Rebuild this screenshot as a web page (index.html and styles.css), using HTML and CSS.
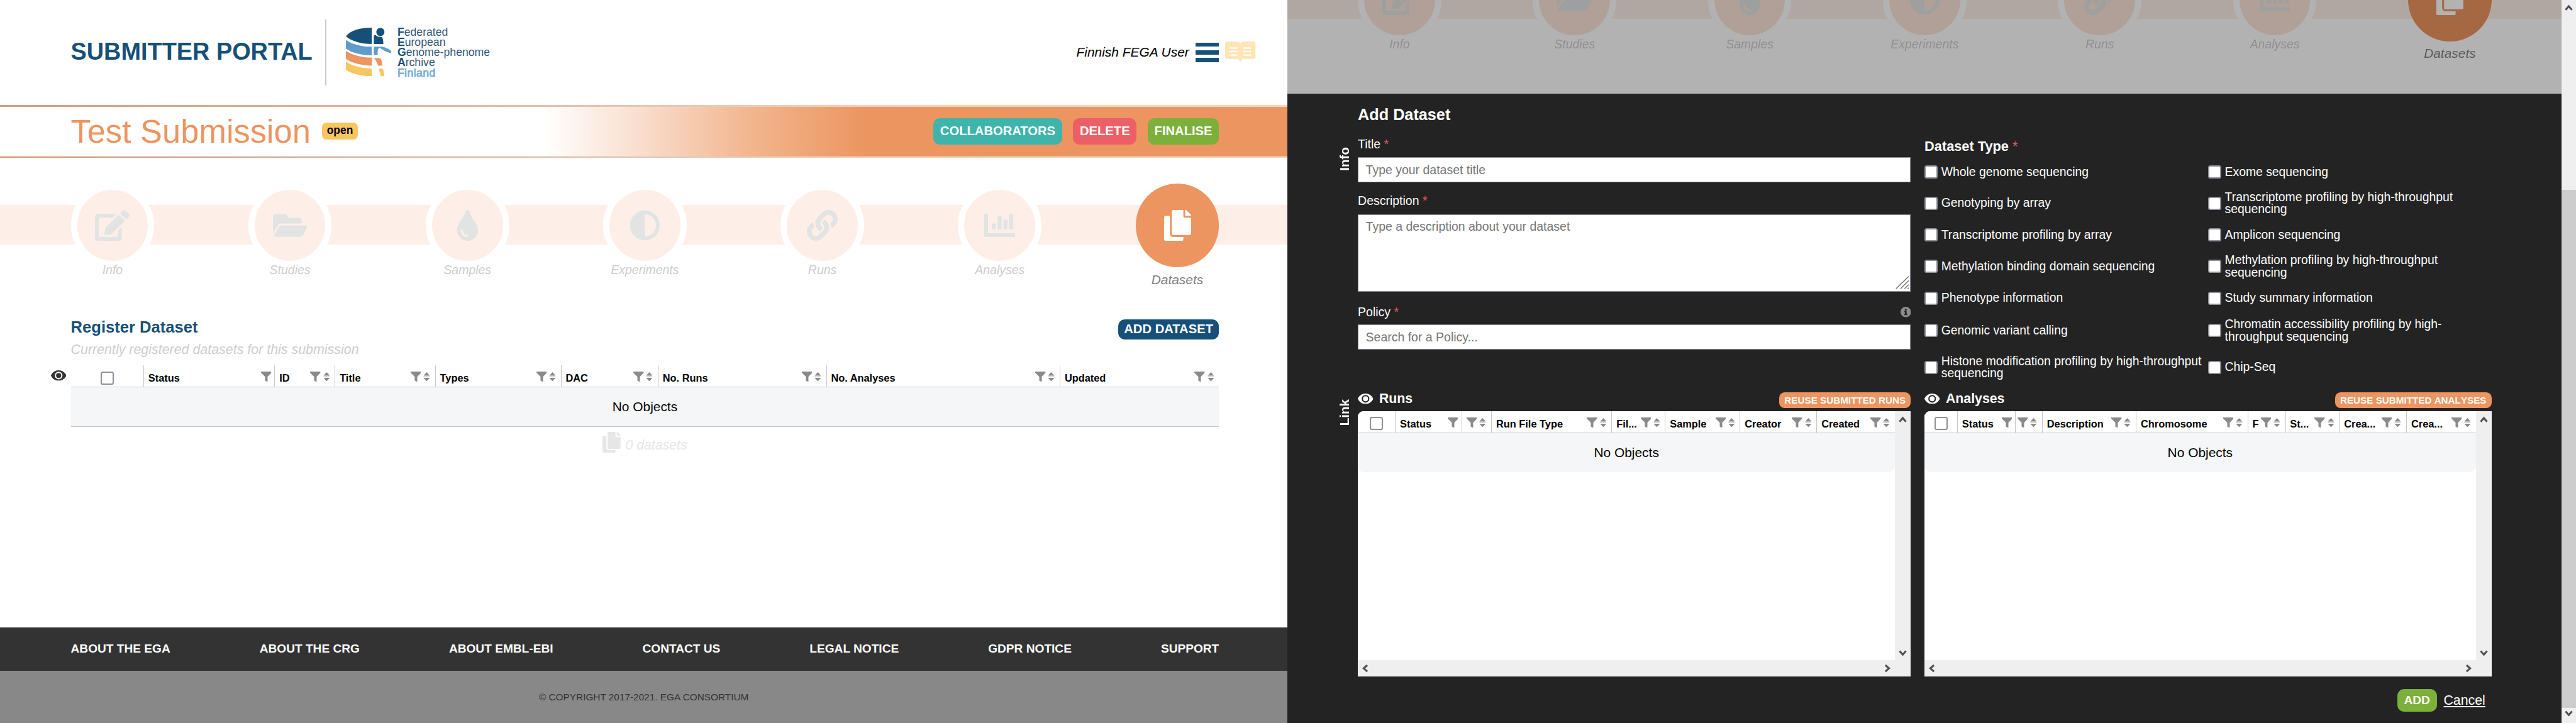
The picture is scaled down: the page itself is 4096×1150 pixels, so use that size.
FILE: index.html
```html
<!DOCTYPE html>
<html lang="en">
<head>
<meta charset="utf-8">
<title>Submitter Portal</title>
<link rel="stylesheet" href="styles.css">
</head>
<body>
<svg class="sprite" aria-hidden="true">
  <symbol id="edit" viewBox="0 0 576 512"><path d="M402.6 83.2l90.2 90.2c3.8 3.8 3.8 10 0 13.8L274.4 405.6l-92.8 10.3c-12.4 1.4-22.9-9.1-21.5-21.5l10.3-92.8L388.8 83.2c3.8-3.8 10-3.8 13.8 0zm162-22.9l-48.8-48.8c-15.2-15.2-39.9-15.2-55.2 0l-35.4 35.4c-3.8 3.8-3.8 10 0 13.8l90.2 90.2c3.8 3.8 10 3.8 13.8 0l35.4-35.4c15.2-15.3 15.2-40 0-55.2zM384 346.2V448H64V128h229.8c3.2 0 6.2-1.3 8.5-3.5l40-40c7.6-7.6 2.2-20.5-8.5-20.5H48C21.5 64 0 85.5 0 112v352c0 26.5 21.5 48 48 48h352c26.5 0 48-21.5 48-48V306.2c0-10.7-12.9-16-20.5-8.5l-40 40c-2.2 2.3-3.5 5.3-3.5 8.5z"/></symbol>
  <symbol id="folder" viewBox="0 0 576 512"><path d="M572.694 292.093L500.27 416.248A63.997 63.997 0 0 1 444.989 448H45.025c-18.523 0-30.064-20.093-20.731-36.093l72.424-124.155A64 64 0 0 1 152 256h399.964c18.523 0 30.064 20.093 20.73 36.093zM152 224h328v-48c0-26.51-21.49-48-48-48H272l-64-64H48C21.49 64 0 85.49 0 112v278.046l69.077-118.418C86.214 242.25 117.989 224 152 224z"/></symbol>
  <symbol id="drop" viewBox="0 0 352 512"><path d="M205.22 22.09c-7.94-28.78-49.44-30.12-58.44 0C100.01 179.85 0 222.72 0 333.91 0 432.35 78.72 512 176 512s176-79.65 176-178.09c0-111.75-99.79-153.34-146.78-311.82zM176 448c-61.75 0-112-50.25-112-112 0-8.84 7.16-16 16-16s16 7.16 16 16c0 44.11 35.89 80 80 80 8.84 0 16 7.16 16 16s-7.16 16-16 16z"/></symbol>
  <symbol id="adjust" viewBox="0 0 512 512"><path d="M8 256c0 136.966 111.033 248 248 248s248-111.034 248-248S392.966 8 256 8 8 119.033 8 256zm248 184V72c101.705 0 184 82.311 184 184 0 101.705-82.311 184-184 184z"/></symbol>
  <symbol id="link" viewBox="0 0 512 512"><path d="M326.612 185.391c59.747 59.809 58.927 155.698.36 214.59-.11.12-.24.25-.36.37l-67.2 67.2c-59.27 59.27-155.699 59.262-214.96 0-59.27-59.26-59.27-155.7 0-214.96l37.106-37.106c9.84-9.84 26.786-3.3 27.294 10.606.648 17.722 3.826 35.527 9.69 52.721 1.986 5.822.567 12.262-3.783 16.612l-13.087 13.087c-28.026 28.026-28.905 73.66-1.155 101.96 28.024 28.579 74.086 28.749 102.325.51l67.2-67.19c28.191-28.191 28.073-73.757 0-101.83-3.701-3.694-7.429-6.564-10.341-8.569a16.037 16.037 0 0 1-6.947-12.606c-.396-10.567 3.348-21.456 11.698-29.806l21.054-21.055c5.521-5.521 14.182-6.199 20.584-1.731a152.482 152.482 0 0 1 20.522 17.197zM467.547 44.449c-59.261-59.262-155.69-59.27-214.96 0l-67.2 67.2c-.12.12-.25.25-.36.37-58.566 58.892-59.387 154.781.36 214.59a152.454 152.454 0 0 0 20.521 17.196c6.402 4.468 15.064 3.789 20.584-1.731l21.054-21.055c8.35-8.35 12.094-19.239 11.698-29.806a16.037 16.037 0 0 0-6.947-12.606c-2.912-2.005-6.64-4.875-10.341-8.569-28.073-28.073-28.191-73.639 0-101.83l67.2-67.19c28.239-28.239 74.3-28.069 102.325.51 27.75 28.3 26.872 73.934-1.155 101.96l-13.087 13.087c-4.35 4.35-5.769 10.79-3.783 16.612 5.864 17.194 9.042 34.999 9.69 52.721.509 13.906 17.454 20.446 27.294 10.606l37.106-37.106c59.271-59.259 59.271-155.699.001-214.959z"/></symbol>
  <symbol id="chart" viewBox="0 0 512 512"><path d="M12 64h40a12 12 0 0 1 12 12v308h432a16 16 0 0 1 16 16v32a16 16 0 0 1-16 16H16a16 16 0 0 1-16-16V76a12 12 0 0 1 12-12zM128 236a12 12 0 0 1 12-12h40a12 12 0 0 1 12 12v84h-64zM224 108a12 12 0 0 1 12-12h40a12 12 0 0 1 12 12v212h-64zM320 172a12 12 0 0 1 12-12h40a12 12 0 0 1 12 12v148h-64zM416 76a12 12 0 0 1 12-12h40a12 12 0 0 1 12 12v244h-64z"/></symbol>
  <symbol id="copy" viewBox="0 0 448 512"><path d="M320 448v40c0 13.255-10.745 24-24 24H24c-13.255 0-24-10.745-24-24V120c0-13.255 10.745-24 24-24h72v296c0 30.879 25.121 56 56 56h168zm0-344V0H152c-13.255 0-24 10.745-24 24v368c0 13.255 10.745 24 24 24h272c13.255 0 24-10.745 24-24V128H344c-13.2 0-24-10.8-24-24zm120.971-31.029L375.029 7.029A24 24 0 0 0 358.059 0H352v96h96v-6.059a24 24 0 0 0-7.029-16.97z"/></symbol>
  <symbol id="eye" viewBox="0 0 34 23"><path fill-rule="evenodd" d="M17 0C9.500 0 3.500 4.200.3 10.500a2 2 0 0 0 0 2C3.500 18.800 9.500 23 17 23s13.500-4.200 16.700-10.500a2 2 0 0 0 0-2C30.500 4.200 24.500 0 17 0zM17 3a8.500 8.500 0 1 1 0 17a8.500 8.500 0 0 1 0-17z"/><circle cx="17" cy="11.500" r="5.600"/></symbol>
  <symbol id="filter" viewBox="0 0 23 23"><path d="M0 0h23v2.500L14.500 11.500V23L9 20V11.500L0 2.500z"/></symbol>
  <symbol id="sort" viewBox="0 0 15 20"><path d="M7.500 0L14.500 7.500H.5zM7.500 20L.5 12.500h14z"/><path opacity=".45" d="M.5 9h14v2.200H.5z"/></symbol>
  <symbol id="chevron" viewBox="0 0 18 14"><path fill="none" stroke="#505050" stroke-width="4.200" d="M2 12L9 4l7 8"/></symbol>
</svg>

<div class="screen portal">
  <header class="top">
    <h1>SUBMITTER PORTAL</h1>
    <span class="divider"></span>
    <svg class="logo" viewBox="0 0 100 108">
      <g fill="#165079"><path d="M57 0v36C34 36 12 30 0 19C10 6 32 0 57 0z"/><circle cx="76" cy="9.500" r="9"/><path d="M61.500 36V20c0-4 4-5 6-2c5 3 11 2 12 3c3 4 3 10 3 15z"/></g>
      <g fill="#609ccb"><path d="M0 27c14 10 34 15 57 15v19C34 61 12 55 0 46z"/><path d="M61.500 42h18c8 2 14 4 20 9v5c-7-1-14-5-19-8l-7-4c-4 5-4 11-3 16h-9z"/></g>
      <g fill="#ec9560"><path d="M0 51c14 10 34 15 57 15v18C34 83 12 78 0 69z"/><path d="M62 67h12c5 3 6 9 6 17h-9c-2-6-5-12-9-17z"/></g>
      <g fill="#f8c660"><path d="M0 75c14 10 34 15 57 15v17C34 107 12 102 0 93z"/><path d="M72 90h9c3 5 3 11 3 17h-7c-1-6-3-11-5-17z"/></g>
    </svg>
    <div class="logo-text">
      <span><b>F</b>ederated</span><span><b>E</b>uropean</span><span><b>G</b>enome-phenome</span><span><b>A</b>rchive</span><span class="country">Finland</span>
    </div>
    <span class="user">Finnish FEGA User</span>
    <span class="burger"><i></i><i></i><i></i></span>
    <svg class="book" viewBox="0 0 67 47"><path fill="#fde5b6" d="M5 0h20c5 0 7 2 8.500 5C35 2 37 0 42 0h20c3 0 5 2 5 5v29c0 3-2 4.500-5 4.500H41c-5 0-6 3-7.500 8.500C32 41.500 31 38.500 26 38.500H5c-3 0-5-1.500-5-4.500V5c0-3 2-5 5-5z"/><path stroke="#fff" stroke-width="3.200" stroke-linecap="round" d="M11 14.500h15M11 22h15M11 30h15M41 14.500h15M41 22h15M41 30h15"/></svg>
  </header>

  <div class="titlebar">
    <h2>Test Submission</h2><span class="badge">open</span>
    <div class="buttons"><button class="btn teal">COLLABORATORS</button><button class="btn red">DELETE</button><button class="btn green">FINALISE</button></div>
  </div>

  <nav class="stepper">
    <div class="step"><span class="dot"><svg><use href="#edit"/></svg></span><em>Info</em></div>
    <div class="step"><span class="dot"><svg><use href="#folder"/></svg></span><em>Studies</em></div>
    <div class="step"><span class="dot"><svg><use href="#drop"/></svg></span><em>Samples</em></div>
    <div class="step"><span class="dot"><svg><use href="#adjust"/></svg></span><em>Experiments</em></div>
    <div class="step"><span class="dot"><svg><use href="#link"/></svg></span><em>Runs</em></div>
    <div class="step"><span class="dot"><svg><use href="#chart"/></svg></span><em>Analyses</em></div>
    <div class="step active"><span class="dot"><svg><use href="#copy"/></svg></span><em>Datasets</em></div>
  </nav>

  <main class="register">
    <div class="register-head"><h3>Register Dataset</h3><button class="btn navy">ADD DATASET</button></div>
    <p class="sub">Currently registered datasets for this submission</p>
    <div class="table-line">
      <svg class="eye dark"><use href="#eye"/></svg>
      <div class="table">
        <div class="thead datasets-cols">
          <div class="th check"><span class="box"></span></div>
          <div class="th nosort"><b>Status</b><svg class="fi"><use href="#filter"/></svg></div>
          <div class="th"><b>ID</b><svg class="fi"><use href="#filter"/></svg><svg class="so"><use href="#sort"/></svg></div>
          <div class="th"><b>Title</b><svg class="fi"><use href="#filter"/></svg><svg class="so"><use href="#sort"/></svg></div>
          <div class="th"><b>Types</b><svg class="fi"><use href="#filter"/></svg><svg class="so"><use href="#sort"/></svg></div>
          <div class="th"><b>DAC</b><svg class="fi"><use href="#filter"/></svg><svg class="so"><use href="#sort"/></svg></div>
          <div class="th"><b>No. Runs</b><svg class="fi"><use href="#filter"/></svg><svg class="so"><use href="#sort"/></svg></div>
          <div class="th"><b>No. Analyses</b><svg class="fi"><use href="#filter"/></svg><svg class="so"><use href="#sort"/></svg></div>
          <div class="th"><b>Updated</b><svg class="fi"><use href="#filter"/></svg><svg class="so"><use href="#sort"/></svg></div>
        </div>
        <div class="empty ruled">No Objects</div>
      </div>
    </div>
    <div class="count"><svg><use href="#copy"/></svg><span>0 datasets</span></div>
  </main>

  <footer>
    <div class="links"><a>ABOUT THE EGA</a><a>ABOUT THE CRG</a><a>ABOUT EMBL-EBI</a><a>CONTACT US</a><a>LEGAL NOTICE</a><a>GDPR NOTICE</a><a>SUPPORT</a></div>
    <div class="copyright">© COPYRIGHT 2017-2021. EGA CONSORTIUM</div>
  </footer>
</div>

<div class="screen dialog-screen">
  <div class="behind">
    <nav class="stepper">
      <div class="step"><span class="dot"><svg><use href="#edit"/></svg></span><em>Info</em></div>
      <div class="step"><span class="dot"><svg><use href="#folder"/></svg></span><em>Studies</em></div>
      <div class="step"><span class="dot"><svg><use href="#drop"/></svg></span><em>Samples</em></div>
      <div class="step"><span class="dot"><svg><use href="#adjust"/></svg></span><em>Experiments</em></div>
      <div class="step"><span class="dot"><svg><use href="#link"/></svg></span><em>Runs</em></div>
      <div class="step"><span class="dot"><svg><use href="#chart"/></svg></span><em>Analyses</em></div>
      <div class="step active"><span class="dot"><svg><use href="#copy"/></svg></span><em>Datasets</em></div>
    </nav>
  </div>

  <form class="dialog">
    <h3>Add Dataset</h3>
    <section class="block info">
      <div class="side">Info</div>
      <div class="fields">
        <div class="label">Title <i>*</i></div>
        <div class="input">Type your dataset title</div>
        <div class="label">Description <i>*</i></div>
        <div class="input area"><span>Type a description about your dataset</span><svg class="grip" viewBox="0 0 30 29"><path stroke="#6d6d6d" stroke-width="2" d="M1 28L29 1M11 28L29 10M20 28l9-9M27 28l2-2"/></svg></div>
        <div class="label policy"><span>Policy <i>*</i></span><svg viewBox="0 0 23 23"><circle cx="11.500" cy="11.500" r="11.500" fill="#8c8c8c"/><path fill="#232323" d="M9.500 4.500h4v3.500h-4zM8 9.500h5.500v7H15v2H8v-2h1.500v-5H8z"/></svg></div>
        <div class="input">Search for a Policy...</div>
      </div>
      <div class="types">
        <div class="types-title">Dataset Type <i>*</i></div>
        <div class="types-grid">
          <label><span class="box"></span>Whole genome sequencing</label>
          <label><span class="box"></span>Exome sequencing</label>
          <label><span class="box"></span>Genotyping by array</label>
          <label><span class="box"></span>Transcriptome profiling by high-throughput<br>sequencing</label>
          <label><span class="box"></span>Transcriptome profiling by array</label>
          <label><span class="box"></span>Amplicon sequencing</label>
          <label><span class="box"></span>Methylation binding domain sequencing</label>
          <label><span class="box"></span>Methylation profiling by high-throughput<br>sequencing</label>
          <label><span class="box"></span>Phenotype information</label>
          <label><span class="box"></span>Study summary information</label>
          <label><span class="box"></span>Genomic variant calling</label>
          <label><span class="box"></span>Chromatin accessibility profiling by high-<br>throughput sequencing</label>
          <label><span class="box"></span>Histone modification profiling by high-throughput<br>sequencing</label>
          <label><span class="box"></span>Chip-Seq</label>
        </div>
      </div>
    </section>

    <section class="block linked">
      <div class="side">Link</div>
      <div>
        <div class="linked-head"><svg class="eye"><use href="#eye"/></svg><h4>Runs</h4><button class="btn reuse">REUSE SUBMITTED RUNS</button></div>
        <div class="scroller">
          <div class="view">
            <div class="thead runs-cols">
              <div class="th check"><span class="box"></span></div>
              <div class="th nosort"><b>Status</b><svg class="fi"><use href="#filter"/></svg></div>
              <div class="th"><b></b><svg class="fi"><use href="#filter"/></svg><svg class="so"><use href="#sort"/></svg></div>
              <div class="th"><b>Run File Type</b><svg class="fi"><use href="#filter"/></svg><svg class="so"><use href="#sort"/></svg></div>
              <div class="th"><b>Fil...</b><svg class="fi"><use href="#filter"/></svg><svg class="so"><use href="#sort"/></svg></div>
              <div class="th"><b>Sample</b><svg class="fi"><use href="#filter"/></svg><svg class="so"><use href="#sort"/></svg></div>
              <div class="th"><b>Creator</b><svg class="fi"><use href="#filter"/></svg><svg class="so"><use href="#sort"/></svg></div>
              <div class="th"><b>Created</b><svg class="fi"><use href="#filter"/></svg><svg class="so"><use href="#sort"/></svg></div>
            </div>
            <div class="empty">No Objects</div>
          </div>
          <div class="vbar"><svg><use href="#chevron"/></svg><svg class="down"><use href="#chevron"/></svg></div>
          <div class="hbar"><svg class="left"><use href="#chevron"/></svg><svg class="right"><use href="#chevron"/></svg></div>
        </div>
      </div>
      <div>
        <div class="linked-head"><svg class="eye"><use href="#eye"/></svg><h4>Analyses</h4><button class="btn reuse">REUSE SUBMITTED ANALYSES</button></div>
        <div class="scroller">
          <div class="view">
            <div class="thead analyses-cols">
              <div class="th check"><span class="box"></span></div>
              <div class="th nosort"><b>Status</b><svg class="fi"><use href="#filter"/></svg></div>
              <div class="th tight"><b></b><svg class="fi"><use href="#filter"/></svg><svg class="so"><use href="#sort"/></svg></div>
              <div class="th"><b>Description</b><svg class="fi"><use href="#filter"/></svg><svg class="so"><use href="#sort"/></svg></div>
              <div class="th"><b>Chromosome</b><svg class="fi"><use href="#filter"/></svg><svg class="so"><use href="#sort"/></svg></div>
              <div class="th"><b>F</b><svg class="fi"><use href="#filter"/></svg><svg class="so"><use href="#sort"/></svg></div>
              <div class="th"><b>St...</b><svg class="fi"><use href="#filter"/></svg><svg class="so"><use href="#sort"/></svg></div>
              <div class="th"><b>Crea...</b><svg class="fi"><use href="#filter"/></svg><svg class="so"><use href="#sort"/></svg></div>
              <div class="th"><b>Crea...</b><svg class="fi"><use href="#filter"/></svg><svg class="so"><use href="#sort"/></svg></div>
            </div>
            <div class="empty">No Objects</div>
          </div>
          <div class="vbar"><svg><use href="#chevron"/></svg><svg class="down"><use href="#chevron"/></svg></div>
          <div class="hbar"><svg class="left"><use href="#chevron"/></svg><svg class="right"><use href="#chevron"/></svg></div>
        </div>
      </div>
    </section>
    <div class="actions"><button class="btn add">ADD</button><a>Cancel</a></div>
  </form>
</div>

<div class="page-scroll"><svg><use href="#chevron"/></svg><span class="thumb"></span><svg class="down"><use href="#chevron"/></svg></div>
</body>
</html>
```

FILE: styles.css
```css
/* 1rem is ten layout units; the page is 567.8rem wide and scales with the window */
html { font-size: calc(100vw / 567.8); }
* { box-sizing: border-box; }
body {
  margin: 0;
  width: 100vw;
  height: 100vh;
  overflow: hidden;
  display: grid;
  grid-template-columns: 283.8rem 280.8rem 1fr;
  font-family: "Liberation Sans", Arial, sans-serif;
  font-size: 2.9rem;
  color: #000;
  background: #fff;
}
h1, h2, h3, h4, p { margin: 0; }
.sprite { position: absolute; width: 0; height: 0; }
svg { display: block; flex: none; fill: currentColor; }
.screen { display: flex; flex-direction: column; min-width: 0; height: 100vh; overflow: hidden; }

/* buttons */
.btn {
  border: 0;
  margin: 0;
  padding: 0 1.5rem;
  height: 5.9rem;
  border-radius: 1.5rem;
  font: bold 2.8rem "Liberation Sans", Arial, sans-serif;
  color: #fff;
  white-space: nowrap;
}
.teal { background: #3eb4aa; }
.red { background: #ec5f66; }
.green { background: #7cb03a; }
.navy { background: #165079; height: 4.4rem; padding: 0 1.3rem; }

/* header */
.top { height: 23.1rem; padding: 0 7rem 0 15.6rem; display: flex; align-items: center; }
h1 { font-size: 5.25rem; color: #165079; line-height: 1; width: 56.1rem; white-space: nowrap; }
.divider { width: .2rem; height: 14.5rem; background: #c8c8c8; }
.logo { width: 10rem; height: 10.8rem; margin-left: 4.3rem; }
.logo-text { display: flex; flex-direction: column; margin-left: 1.4rem; font-size: 2.45rem; line-height: 2.24rem; color: #34597a; }
.logo-text b { color: #165079; }
.logo-text .country { color: #74add6; -webkit-text-stroke: .1rem #74add6; letter-spacing: .06rem; }
.user { margin-left: auto; font-style: italic; }
.burger { width: 5.2rem; height: 4.3rem; margin-left: 1.4rem; display: flex; flex-direction: column; justify-content: space-between; }
.burger i { height: .9rem; background: #165079; }
.book { width: 6.7rem; height: 4.7rem; margin-left: 1.4rem; }

/* submission title */
.titlebar {
  height: 11.7rem;
  padding: .4rem 15.1rem .4rem 15.6rem;
  display: flex;
  align-items: center;
  background:
    linear-gradient(90deg, #fff 120rem, #f9dccb 142rem, #f2b68f 165rem, #ec9560 191rem) center / 100% 10.9rem no-repeat,
    linear-gradient(90deg, #cf9f7d, #e6c6b6 142rem, #f3cfb6 190rem, #f6d6bd);
}
h2 { font-size: 7.26rem; font-weight: normal; line-height: 1; color: #ec9560; white-space: nowrap; }
.badge { margin-left: 2.5rem; padding: 0 1.1rem; height: 3.7rem; line-height: 3.6rem; border-radius: 1rem; background: #f8c660; font-size: 2.42rem; font-weight: bold; }
.buttons { margin-left: auto; display: flex; gap: 2.4rem; }

/* stepper */
.stepper {
  flex: none;
  height: 35.6rem;
  padding: 5.7rem 15.1rem 0 15.6rem;
  display: flex;
  justify-content: space-between;
  background: linear-gradient(#fdefe8, #fdefe8) 0 10.4rem / 100% 8.8rem no-repeat #fff;
}
.step { width: 18.4rem; display: flex; flex-direction: column; align-items: center; }
.dot { width: 18.4rem; height: 18.4rem; border-radius: 50%; border: 1.5rem solid #fff; background: #fdefe8; color: #e2e3e3; display: grid; place-items: center; }
.dot svg { width: 7.6rem; height: 6.8rem; }
.step em { margin-top: -.8rem; height: 3rem; line-height: 3rem; font-size: 2.7rem; color: #cdcdcd; }
.active .dot { border: 0; background: #ec9560; color: #fff; }
.active em { margin-top: 1.2rem; font-size: 2.9rem; color: #808080; }

/* registered datasets */
.register { flex: 1; padding: 0 15.1rem 0 15.6rem; }
.register-head { display: flex; justify-content: space-between; height: 4.4rem; }
.register h3 { font-size: 3.55rem; line-height: 3.4rem; color: #165079; }
.sub { margin-top: .55rem; font-size: 2.97rem; line-height: 3.4rem; font-style: italic; color: #cdcdcd; }
.table-line { display: flex; margin: 1.85rem 0 0 -4.4rem; }
.eye { width: 3.4rem; height: 2.3rem; }
.eye.dark { color: #333; margin: 1.1rem 1rem 0 0; }
.table { flex: 1; }
.thead { display: grid; height: 4.8rem; background: #fff; border-bottom: .2rem solid #c8c8c8; }
.datasets-cols { grid-template-columns: 16rem 28.9rem 13.3rem 22.1rem 27.7rem 21.4rem 37.1rem 51.5rem 1fr; }
.runs-cols { grid-template-columns: 8.2rem 14.6rem 6.6rem 26.5rem 11.8rem 16.5rem 16.9rem 1fr; }
.analyses-cols { grid-template-columns: 7.2rem 12.8rem 5.9rem 20.7rem 24.6rem 8.3rem 11.9rem 14.8rem 1fr; }
.th { display: flex; align-items: center; min-width: 0; padding: .3rem 1.1rem 0 .95rem; border-left: .2rem solid #c8c8c8; }
.th b { flex: 1; min-width: 0; padding-top: .7rem; font-size: 2.27rem; line-height: 2.6rem; white-space: nowrap; }
.th.nosort { padding-right: .7rem; }
.th.tight { padding-left: 0; }
.check { border-left: 0; justify-content: center; padding: .6rem 0 0; }
.datasets-cols .check { padding: .9rem 0 0; }
.fi { width: 2.3rem; height: 2.3rem; color: #8a8a8a; }
.so { width: 1.5rem; height: 2rem; margin-left: .5rem; color: #8a8a8a; }
.box { flex: none; width: 2.9rem; height: 2.9rem; border: .35rem solid #8f8f9d; border-radius: .5rem; background: #fff; }
.empty { height: 8.6rem; padding-top: .9rem; line-height: 6.8rem; text-align: center; background: #f4f6f8; }
.empty.ruled { height: 8.8rem; padding-top: .8rem; border-bottom: .2rem solid #c8c8c8; }
.count { margin-top: 1rem; display: flex; justify-content: center; color: #e6e6e6; font-size: 2.95rem; font-style: italic; }
.count svg { width: 4rem; height: 4.6rem; margin-right: 1rem; }
.count span { line-height: 5.9rem; height: 4.6rem; }

/* footer */
.links { height: 9.6rem; padding: 0 15.1rem 0 15.6rem; display: flex; justify-content: space-between; align-items: center; background: #333; color: #fff; font-size: 2.65rem; font-weight: bold; }
.copyright { height: 11.5rem; line-height: 11.7rem; text-align: center; background: #888; color: #333; font-size: 2.13rem; }

/* page dimmed behind the dialog */
.behind { height: 20.6rem; flex: none; overflow: hidden; filter: brightness(.7); background: #fff; }
.behind .stepper { margin-top: -15rem; padding: 5.7rem 15.4rem 0 15.5rem; }
.behind .dot { background: #fbe5d9; }
.behind .active .dot { background: #ec9560; }

/* dialog */
.dialog { flex: 1; padding: 3rem 15.4rem 0 15.5rem; background: #232323; color: #fff; }
.dialog h3 { font-size: 3.5rem; line-height: 3.4rem; }
.label i, .types-title i { font-style: normal; font-weight: normal; color: #e5565c; }
.block { display: grid; grid-template-columns: 4.3rem 121.9rem 3rem 125rem; margin-left: -4.3rem; }
.block > :nth-child(3) { grid-column: 4; }
.side { width: 2.8rem; writing-mode: vertical-rl; transform: rotate(180deg); line-height: 2.8rem; font-size: 2.85rem; font-weight: bold; justify-self: start; align-self: start; }
.info { margin-top: 3.2rem; height: 56.3rem; }
.info .side { margin-top: 2.3rem; }
.linked .side { margin-top: 1.5rem; }
.label { font-size: 2.7rem; line-height: 3.2rem; margin-bottom: 1.2rem; }
.input { height: 5.6rem; margin-bottom: 2.5rem; padding: 0 1.6rem; border: .2rem solid #8f8f9d; background: #fff; color: #757575; font-size: 2.7rem; line-height: 5.4rem; }
.area { display: flex; height: 17rem; margin: 1.4rem 0 2.9rem; line-height: 5.1rem; justify-content: space-between; padding-right: .2rem; }
.grip { width: 3rem; height: 2.9rem; align-self: flex-end; margin-bottom: .4rem; }
.policy { display: flex; justify-content: space-between; align-items: center; margin-bottom: 1.1rem; }
.policy svg { width: 2.3rem; height: 2.3rem; }
.types { padding-top: .4rem; }
.types-title { font-size: 3.02rem; font-weight: bold; line-height: 3.2rem; margin-bottom: .7rem; }
.types-grid { display: grid; grid-template-columns: 62.5rem 62.5rem; grid-template-rows: 6.9rem 6.8rem 7.1rem 6.9rem 7.1rem 7.2rem 9rem; font-size: 2.68rem; line-height: 2.7rem; }
.types-grid label { display: flex; align-items: center; white-space: nowrap; }
.types-grid .box { margin-right: .8rem; }
.linked-head { display: flex; height: 3.5rem; margin-bottom: .7rem; }
.linked-head .eye { margin-top: .25rem; }
.linked-head h4 { margin-left: 1.3rem; font-size: 2.95rem; line-height: 2.9rem; }
.reuse { margin-left: auto; height: 3.5rem; padding: 0 1.15rem; border-radius: 1.2rem; font-size: 2.11rem; font-kerning: none; background: #ec9560; }
.scroller { display: grid; height: 58.5rem; grid-template: 1fr 3.6rem / 1fr 3.5rem; background: #efefef; color: #000; border-top-left-radius: 1.3rem; overflow: hidden; }
.view { background: #fff; }
.view .empty { border-radius: 0 0 1.4rem 1.4rem; }
.vbar { display: flex; flex-direction: column; justify-content: space-between; align-items: center; padding: 1.1rem 0 .9rem; }
.hbar { display: flex; justify-content: space-between; align-items: center; padding: 0 .7rem; }
.vbar svg, .hbar svg, .page-scroll svg { width: 1.8rem; height: 1.4rem; }
.down { transform: rotate(180deg); }
.left { transform: rotate(-90deg); }
.right { transform: rotate(90deg); }
.actions { display: flex; justify-content: flex-end; align-items: center; gap: 1.5rem; margin-top: 2.8rem; padding-right: 1.4rem; }
.add { height: 4.9rem; font-size: 2.65rem; background: #7cb03a; }
.actions a { font-size: 2.95rem; text-decoration: underline; }

/* page scrollbar */
.page-scroll { display: flex; flex-direction: column; align-items: center; height: 100vh; padding: 1rem 0; background: #efefef; }
.thumb { width: 100%; height: 114.2rem; margin-top: 39.5rem; background: #cdcdcd; }
.page-scroll .down { margin-top: .6rem; }
```
